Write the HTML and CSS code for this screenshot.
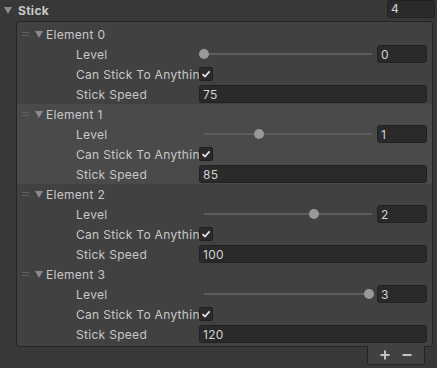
FILE: index.html
```html
<!DOCTYPE html>
<html>
<head>
<meta charset="utf-8">
<title>Stick</title>
<link rel="stylesheet" href="styles.css">
</head>
<body>
<div class="header">
  <span class="fold"></span>
  <span class="title">Stick</span>
  <span class="field size">4</span>
</div>
<div class="list">
  <div class="item">
    <div class="row head"><span class="handle"></span><span class="tri"></span><span>Element 0</span></div>
    <div class="row"><span class="label">Level</span><div class="value"><div class="slider"><div class="track"></div><div class="thumb" style="left:0%"></div></div><span class="field num">0</span></div></div>
    <div class="row"><span class="label">Can Stick To Anything</span><div class="value"><span class="check"><svg width="10" height="10" viewBox="0 0 10 10"><path d="M1.5 5.2 L4 7.6 L8.6 2.4" fill="none" stroke="#e8e8e8" stroke-width="1.6"/></svg></span></div></div>
    <div class="row"><span class="label">Stick Speed</span><div class="value"><span class="field wide">75</span></div></div>
  </div>
  <div class="item active">
    <div class="row head"><span class="handle"></span><span class="tri"></span><span>Element 1</span></div>
    <div class="row"><span class="label">Level</span><div class="value"><div class="slider"><div class="track"></div><div class="thumb" style="left:33.33%"></div></div><span class="field num">1</span></div></div>
    <div class="row"><span class="label">Can Stick To Anything</span><div class="value"><span class="check"><svg width="10" height="10" viewBox="0 0 10 10"><path d="M1.5 5.2 L4 7.6 L8.6 2.4" fill="none" stroke="#e8e8e8" stroke-width="1.6"/></svg></span></div></div>
    <div class="row"><span class="label">Stick Speed</span><div class="value"><span class="field wide">85</span></div></div>
  </div>
  <div class="item">
    <div class="row head"><span class="handle"></span><span class="tri"></span><span>Element 2</span></div>
    <div class="row"><span class="label">Level</span><div class="value"><div class="slider"><div class="track"></div><div class="thumb" style="left:66.67%"></div></div><span class="field num">2</span></div></div>
    <div class="row"><span class="label">Can Stick To Anything</span><div class="value"><span class="check"><svg width="10" height="10" viewBox="0 0 10 10"><path d="M1.5 5.2 L4 7.6 L8.6 2.4" fill="none" stroke="#e8e8e8" stroke-width="1.6"/></svg></span></div></div>
    <div class="row"><span class="label">Stick Speed</span><div class="value"><span class="field wide">100</span></div></div>
  </div>
  <div class="item">
    <div class="row head"><span class="handle"></span><span class="tri"></span><span>Element 3</span></div>
    <div class="row"><span class="label">Level</span><div class="value"><div class="slider"><div class="track"></div><div class="thumb" style="left:100%"></div></div><span class="field num">3</span></div></div>
    <div class="row"><span class="label">Can Stick To Anything</span><div class="value"><span class="check"><svg width="10" height="10" viewBox="0 0 10 10"><path d="M1.5 5.2 L4 7.6 L8.6 2.4" fill="none" stroke="#e8e8e8" stroke-width="1.6"/></svg></span></div></div>
    <div class="row"><span class="label">Stick Speed</span><div class="value"><span class="field wide">120</span></div></div>
  </div>
</div>
<div class="footer">
  <span class="btn"><svg width="10" height="10" viewBox="0 0 10 10"><path d="M5 0.5 V9.5 M0.5 5 H9.5" stroke="#c4c4c4" stroke-width="2"/></svg></span>
  <span class="btn"><svg width="10" height="10" viewBox="0 0 10 10"><path d="M0.5 5 H9.5" stroke="#c4c4c4" stroke-width="2"/></svg></span>
</div>
</body>
</html>
```

FILE: styles.css
```css
*{
  margin:0;
  padding:0;
  box-sizing:border-box;
}
body{
  background:#383838;
  color:#c8c8c8;
  font-family:Inter, "Noto Sans", sans-serif;
  font-size:12px;
  letter-spacing:0.3px;
  overflow:hidden;
}
.header{
  display:flex;
  align-items:center;
  height:20px;
  padding-left:4px;
  padding-right:2px;
}
.fold{
  width:0;
  height:0;
  border-left:4px solid transparent;
  border-right:4px solid transparent;
  border-top:7px solid #8a8a8a;
  margin-right:6px;
  margin-top:1px;
}
.title{
  font-weight:700;
  flex:1;
}
.field{
  display:flex;
  align-items:center;
  height:18px;
  padding-left:3px;
  background:#2a2a2a;
  border:1px solid #212121;
  border-radius:3px;
  color:#d2d2d2;
}
.size{
  width:48px;
  margin-top:-3px;
}
.list{
  margin-left:16px;
  width:417px;
  margin-top:1px;
  background:#414141;
  border:1px solid #242424;
  border-radius:3px;
  padding:2px 0;
}
.item.active{
  background:#4a4a4a;
}
.row{
  display:flex;
  align-items:center;
  height:20px;
}
.head{
  padding-left:5px;
}
.handle{
  width:7px;
  height:4px;
  border-top:1px solid #5e5e5e;
  border-bottom:1px solid #5e5e5e;
  margin-right:6px;
}
.tri{
  width:0;
  height:0;
  border-left:4px solid transparent;
  border-right:4px solid transparent;
  border-top:7px solid #8a8a8a;
  margin-right:3px;
}
.label{
  width:123px;
  margin-left:59px;
  white-space:nowrap;
  overflow:hidden;
}
.value{
  flex:1;
  display:flex;
  align-items:center;
  margin-right:5px;
}
.slider{
  flex:1;
  position:relative;
  height:18px;
  margin:0 8px 0 5px;
}
.track{
  position:absolute;
  left:0;
  right:-3px;
  top:8px;
  height:2px;
  background:#5e5e5e;
}
.thumb{
  position:absolute;
  top:4px;
  width:10px;
  height:10px;
  margin-left:-5px;
  border-radius:50%;
  background:#999999;
}
.num{
  width:50px;
}
.wide{
  flex:1;
}
.check{
  display:flex;
  align-items:center;
  justify-content:center;
  width:14px;
  height:14px;
  background:#2a2a2a;
  border:1px solid #1e1e1e;
  border-radius:2px;
}
.footer{
  display:flex;
  justify-content:space-around;
  align-items:center;
  width:58px;
  height:19px;
  margin-left:367px;
  margin-top:-1px;
  background:#414141;
  border:1px solid #242424;
  border-top:none;
  border-radius:0 0 3px 3px;
  padding:0 6px;
}
.btn{
  display:flex;
}
```
